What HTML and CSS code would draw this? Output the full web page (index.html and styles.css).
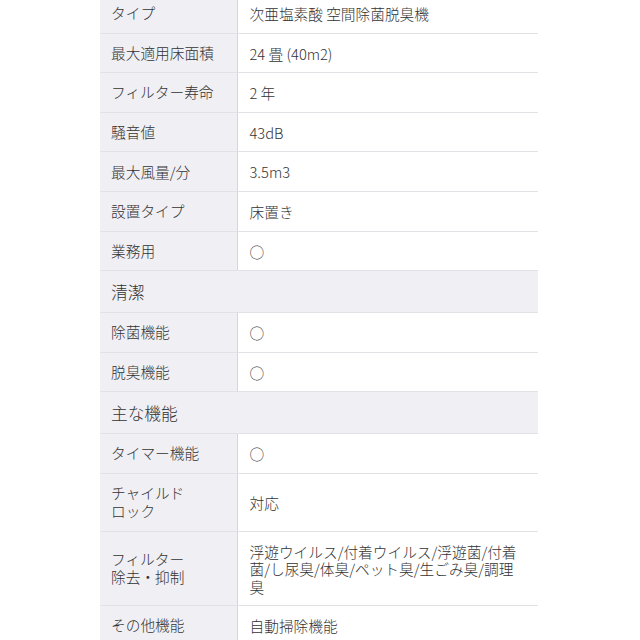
FILE: index.html
```html
<!DOCTYPE html>
<html lang="ja">
<head>
  <meta charset="UTF-8">
  <meta name="viewport" content="width=device-width, initial-scale=1.0">
  <title>仕様</title>
  <link rel="stylesheet" href="styles.css">
</head>
<body>
  <div class="spec">
      <table class="spec-table">
          <colgroup>
              <col class="col-label">
              <col>
          </colgroup>
          <tr><th>タイプ</th><td>次亜塩素酸 空間除菌脱臭機</td></tr>
          <tr><th>最大適用床面積</th><td>24 畳 (40m2)</td></tr>
          <tr><th>フィルター寿命</th><td>2 年</td></tr>
          <tr><th>騒音値</th><td>43dB</td></tr>
          <tr><th>最大風量/分</th><td>3.5m3</td></tr>
          <tr><th>設置タイプ</th><td>床置き</td></tr>
          <tr><th>業務用</th><td>○</td></tr>
          <tr class="section"><th colspan="2">清潔</th></tr>
          <tr><th>除菌機能</th><td>○</td></tr>
          <tr><th>脱臭機能</th><td>○</td></tr>
          <tr class="section"><th colspan="2">主な機能</th></tr>
          <tr><th>タイマー機能</th><td>○</td></tr>
          <tr><th>チャイルド<br>ロック</th><td>対応</td></tr>
          <tr><th>フィルター<br>除去・抑制</th><td>浮遊ウイルス/付着ウイルス/浮遊菌/付着菌/し尿臭/体臭/ペット臭/生ごみ臭/調理臭</td></tr>
          <tr><th>その他機能</th><td>自動掃除機能</td></tr>
      </table>
  </div>
</body>
</html>
```

FILE: styles.css
```css
body {
    font-family: "Noto Sans CJK JP", "Noto Sans", sans-serif;
    background: #ffffff;
    color: #333333;
    margin: 0;
    padding: 0;
}
.spec {
    width: 438px;
    margin: -6px 0 0 100px;
}
.spec-table {
    width: 100%;
    border-collapse: collapse;
    table-layout: fixed;
}
.col-label {
    width: 137px;
}
.spec-table th,
.spec-table td {
    font-size: 14.7px;
    font-weight: 300;
    line-height: 17.6px;
    text-align: left;
    vertical-align: middle;
    padding: 11px 10px 10px 12px;
    border-bottom: 1px solid #e2e2e6;
}
.spec-table th {
    line-height: 18.3px;
    padding: 10px 10px 10px 11px;
    background: #efeff4;
    border-right: 1px solid #d6d6da;
}
.spec-table td {
    background: #ffffff;
}
.spec-table .section th {
    font-size: 16.7px;
    line-height: 20px;
    border-right: none;
    padding-top: 11px;
    padding-bottom: 10px;
}
```
